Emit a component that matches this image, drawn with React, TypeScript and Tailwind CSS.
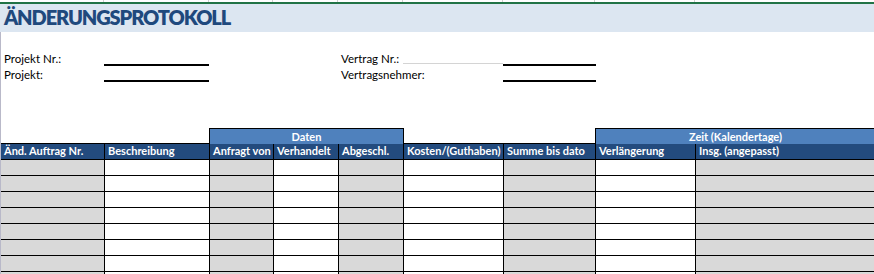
const cols = 'grid grid-cols-[104px_105px_64px_65px_65px_100px_92px_100px_179px]'

const headers = [
  'Änd. Auftrag Nr.',
  'Beschreibung',
  'Anfragt von',
  'Verhandelt',
  'Abgeschl.',
  'Kosten/(Guthaben)',
  'Summe bis dato',
  'Verlängerung',
  'Insg. (angepasst)',
]

const shaded = [true, false, true, false, true, false, true, false, true]

function FormLine({ label }: { label: string }) {
  return (
    <div className="flex h-4 items-end">
      <span className="leading-none pb-[2px]">{label}</span>
    </div>
  )
}

export default function App() {
  return (
    <div
      className="h-[274px] w-[874px] overflow-hidden bg-white text-[11.5px] text-black"
      style={{ fontFamily: 'Lato, "Open Sans", sans-serif' }}
    >
      {/* column ticks from the sheet header */}
      <div className={`${cols} h-[2px]`}>
        {headers.map((h, i) => (
          <div key={h} className={i < 8 ? 'border-r border-[#d0d0d0]' : ''} />
        ))}
      </div>
      <div className="h-[2px] bg-[#217346]" />
      <div className="flex h-[28px] items-end bg-[#dce6f1] pb-[5px] pl-[4px]">
        <h1 className="text-[20px] font-extrabold leading-none tracking-[-1.1px] text-[#1f497d]">
          ÄNDERUNGSPROTOKOLL
        </h1>
      </div>

      <div className="border-l border-[#b9b9c9]">
        <div className="flex pt-[18px]">
          <div className="w-[103px] pl-[3px]">
            <FormLine label="Projekt Nr.:" />
            <FormLine label="Projekt:" />
          </div>
          <div className="w-[105px]">
            <div className="h-4 border-b-2 border-black" />
            <div className="h-4 border-b-2 border-black" />
          </div>
          <div className="w-[132px]" />
          <div className="w-[162px]">
            <div className="flex h-4 items-end">
              <span className="w-[62px] pb-[2px] leading-none">Vertrag Nr.:</span>
              <div className="mb-[2px] h-px flex-1 bg-[#d4d4d4]" />
            </div>
            <FormLine label="Vertragsnehmer:" />
          </div>
          <div className="w-[93px]">
            <div className="h-4 border-b-2 border-black" />
            <div className="h-4 border-b-2 border-black" />
          </div>
        </div>

        <div className="h-[46px]" />

        {/* group header */}
        <div className={`${cols} h-4 border-b border-black text-[11px] font-bold text-white`}>
          <div className="col-span-2" />
          <div className="col-span-3 -ml-px flex items-center justify-center border-x border-t border-black bg-[#4f81bd]">
            Daten
          </div>
          <div className="col-span-2" />
          <div className="col-span-2 -ml-px flex items-center justify-center border-l border-t border-black bg-[#4f81bd]">
            Zeit (Kalendertage)
          </div>
        </div>

        {/* column headers */}
        <div className={`${cols} h-4 text-[11px] font-bold text-white`}>
          {headers.map((h) => (
            <div
              key={h}
              className="flex items-center overflow-hidden whitespace-nowrap border-b border-r border-black bg-[#234b7e] pl-[3px]"
            >
              {h}
            </div>
          ))}
        </div>

        {Array.from({ length: 8 }).map((_, r) => (
          <div key={r} className={`${cols} h-4`}>
            {shaded.map((s, c) => (
              <div
                key={c}
                className={`border-b border-r border-black ${s ? 'bg-[#d9d9d9]' : 'bg-white'}`}
              />
            ))}
          </div>
        ))}
      </div>
    </div>
  )
}
